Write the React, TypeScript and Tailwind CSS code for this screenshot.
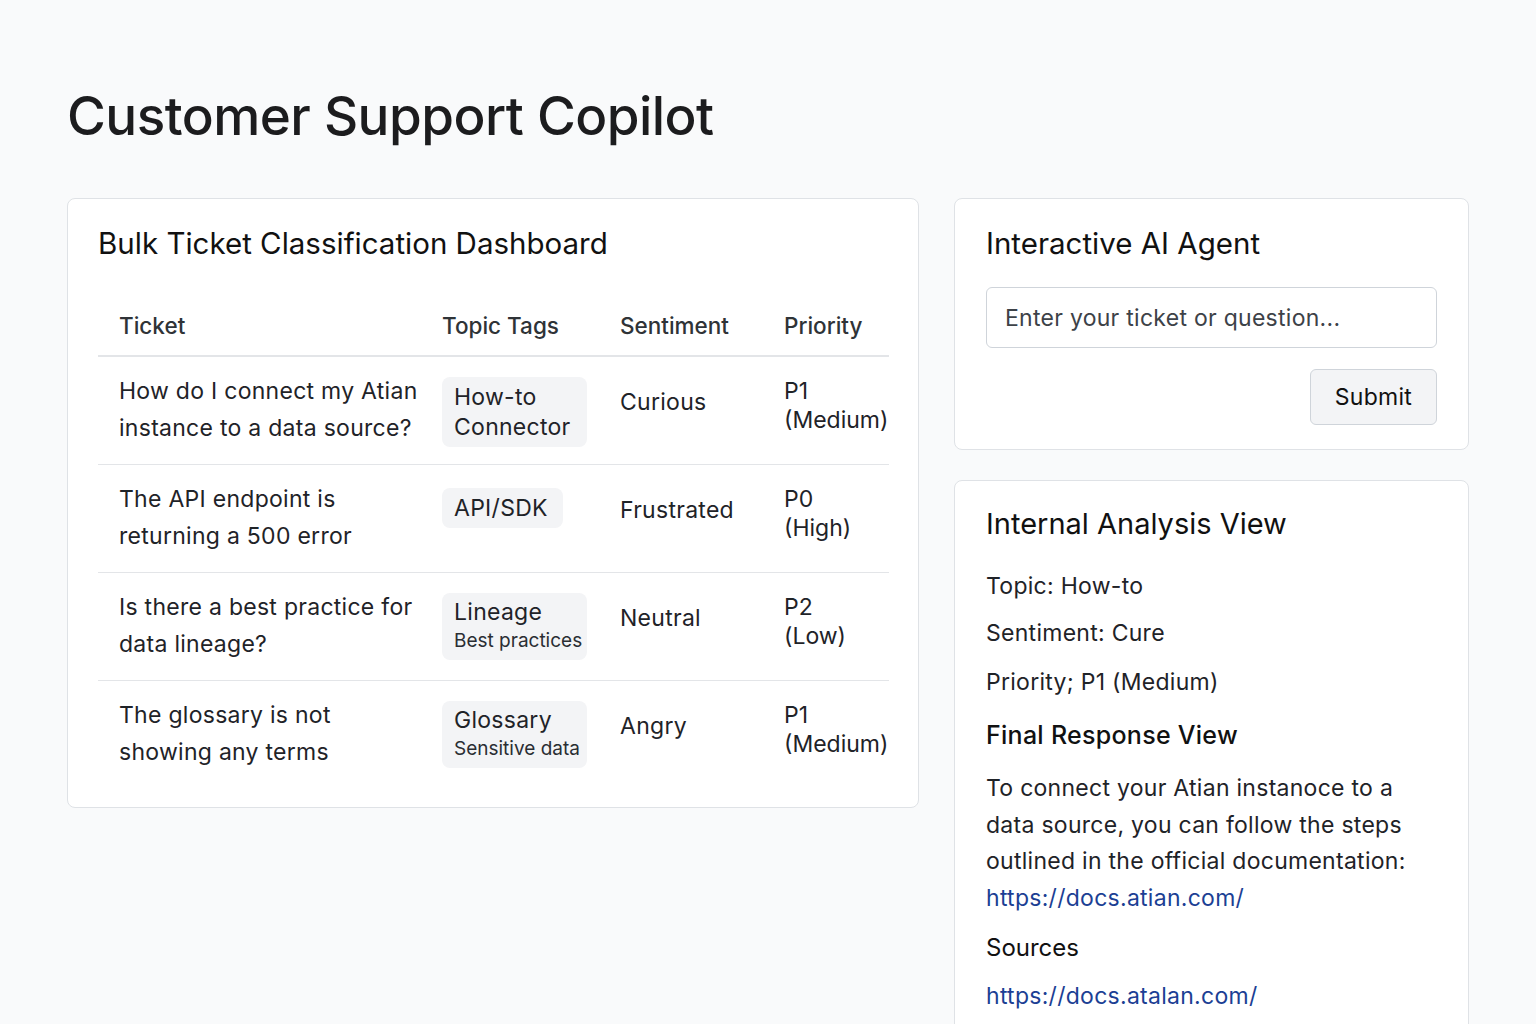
import React from 'react';

interface TicketRow {
  id: number;
  ticket: [string, string];
  tagMain: string;
  tagSub?: string;
  tagSmall?: boolean;
  tagWidth: string;
  sentiment: string;
  priority: string;
  level: string;
}

const ROWS: TicketRow[] = [
  { id: 1, ticket: ['How do I connect my Atian', 'instance to a data source?'], tagMain: 'How-to', tagSub: 'Connector', tagWidth: 'w-[145px]', sentiment: 'Curious', priority: 'P1', level: '(Medium)' },
  { id: 2, ticket: ['The API endpoint is', 'returning a 500 error'], tagMain: 'API/SDK', tagWidth: 'w-[121px]', sentiment: 'Frustrated', priority: 'P0', level: '(High)' },
  { id: 3, ticket: ['Is there a best practice for', 'data lineage?'], tagMain: 'Lineage', tagSub: 'Best practices', tagSmall: true, tagWidth: 'w-[145px]', sentiment: 'Neutral', priority: 'P2', level: '(Low)' },
  { id: 4, ticket: ['The glossary is not', 'showing any terms'], tagMain: 'Glossary', tagSub: 'Sensitive data', tagSmall: true, tagWidth: 'w-[145px]', sentiment: 'Angry', priority: 'P1', level: '(Medium)' },
];

const GRID = 'grid grid-cols-[344px_178px_164px_1fr]';

export default function App() {
  return (
    <div className="min-h-screen bg-[#f9fafb] px-[67px] pt-[90px] font-['Inter','Liberation_Sans',sans-serif] text-[#1f2328]">
      <h1 className="text-[53px] leading-none font-medium tracking-[-0.01em] text-[#1c1c1e]">Customer Support Copilot</h1>

      <div className="mt-[55px] flex items-start gap-[35px]">
        {/* bulk dashboard */}
        <div className="w-[852px] bg-white border border-[#dfe2e6] rounded-lg pt-[26px] pb-[18px] pl-[30px] pr-[29px]">
          <h2 className="text-[29.5px] leading-[36px] text-[#111]">Bulk Ticket Classification Dashboard</h2>

          <div className="mt-[35px] text-[23px] tracking-[0.012em]">
            <div className={`${GRID} h-[61px] items-center border-b-2 border-[#e3e5e8] text-[22.5px] font-medium tracking-normal text-[#2f3337]`}>
              <div className="pl-[21px]">Ticket</div>
              <div>Topic Tags</div>
              <div>Sentiment</div>
              <div>Priority</div>
            </div>

            {ROWS.map((row, i) => (
              <div
                key={row.id}
                className={`${GRID} h-[108px] items-start pt-4 text-[#1f2328] ${i < ROWS.length - 1 ? 'border-b border-[#e3e5e8]' : ''}`}
              >
                <div className="pl-[21px] leading-[37px] whitespace-nowrap">
                  {row.ticket[0]}<br />{row.ticket[1]}
                </div>
                <div className={row.tagSub ? 'mt-1' : 'mt-[7px]'}>
                  <div className={`${row.tagWidth} rounded-lg bg-[#f3f4f6] px-3 whitespace-nowrap ${row.tagSmall ? 'pt-[4px] pb-[6px]' : 'py-[5px]'}`}>
                    <div className="leading-[30px]">{row.tagMain}</div>
                    {row.tagSub && (
                      <div className={row.tagSmall ? 'text-[19px] leading-[27px] tracking-normal text-[#2a2e33]' : 'leading-[30px]'}>{row.tagSub}</div>
                    )}
                  </div>
                </div>
                <div className="mt-[11px] leading-[37px]">{row.sentiment}</div>
                <div className="mt-1 leading-[29px] whitespace-nowrap tracking-normal">
                  {row.priority}<br />{row.level}
                </div>
              </div>
            ))}
          </div>
        </div>

        {/* right column */}
        <div className="w-[515px] flex flex-col gap-[30px] text-[23px] tracking-[0.012em]">
          <div className="bg-white border border-[#dfe2e6] rounded-lg pt-[26px] pb-6 px-[31px]">
            <h2 className="text-[29.5px] leading-[36px] tracking-normal text-[#111]">Interactive AI Agent</h2>
            <input
              className="mt-[26px] block w-full h-[61px] rounded-md border border-[#cfd4da] bg-white px-[18px] text-[23px] tracking-[0.012em] text-[#1f2328] placeholder:text-[#3d4248] outline-none"
              placeholder="Enter your ticket or question..."
            />
            <div className="mt-[21px] flex justify-end">
              <button className="w-[127px] h-[56px] rounded-md border border-[#cfd4da] bg-[#f3f4f6] text-[23px] text-[#111]">Submit</button>
            </div>
          </div>

          <div className="bg-white border border-[#dfe2e6] rounded-lg pt-[25px] pb-10 px-[31px]">
            <h2 className="text-[29px] leading-[36px] tracking-normal text-[#111]">Internal Analysis View</h2>
            <p className="mt-[26px] leading-[36px]">Topic: How-to</p>
            <p className="mt-[11px] leading-[36px]">Sentiment: Cure</p>
            <p className="mt-[13px] leading-[36px]">Priority; P1 (Medium)</p>
            <h3 className="mt-[17px] text-[25px] leading-[36px] font-medium text-[#111]">Final Response View</h3>
            <p className="mt-[17px] leading-[36.5px] whitespace-nowrap">
              To connect your Atian instanoce to a<br />
              data source, you can follow the steps<br />
              outlined in the official documentation:<br />
              <a href="#" className="text-[#1c3f94]">https://docs.atian.com/</a>
            </p>
            <h3 className="mt-[14px] text-[24px] leading-[36px] tracking-normal text-[#111]">Sources</h3>
            <a href="#" className="mt-3 block leading-[36px] text-[#1c3f94]">https://docs.atalan.com/</a>
          </div>
        </div>
      </div>
    </div>
  );
}
